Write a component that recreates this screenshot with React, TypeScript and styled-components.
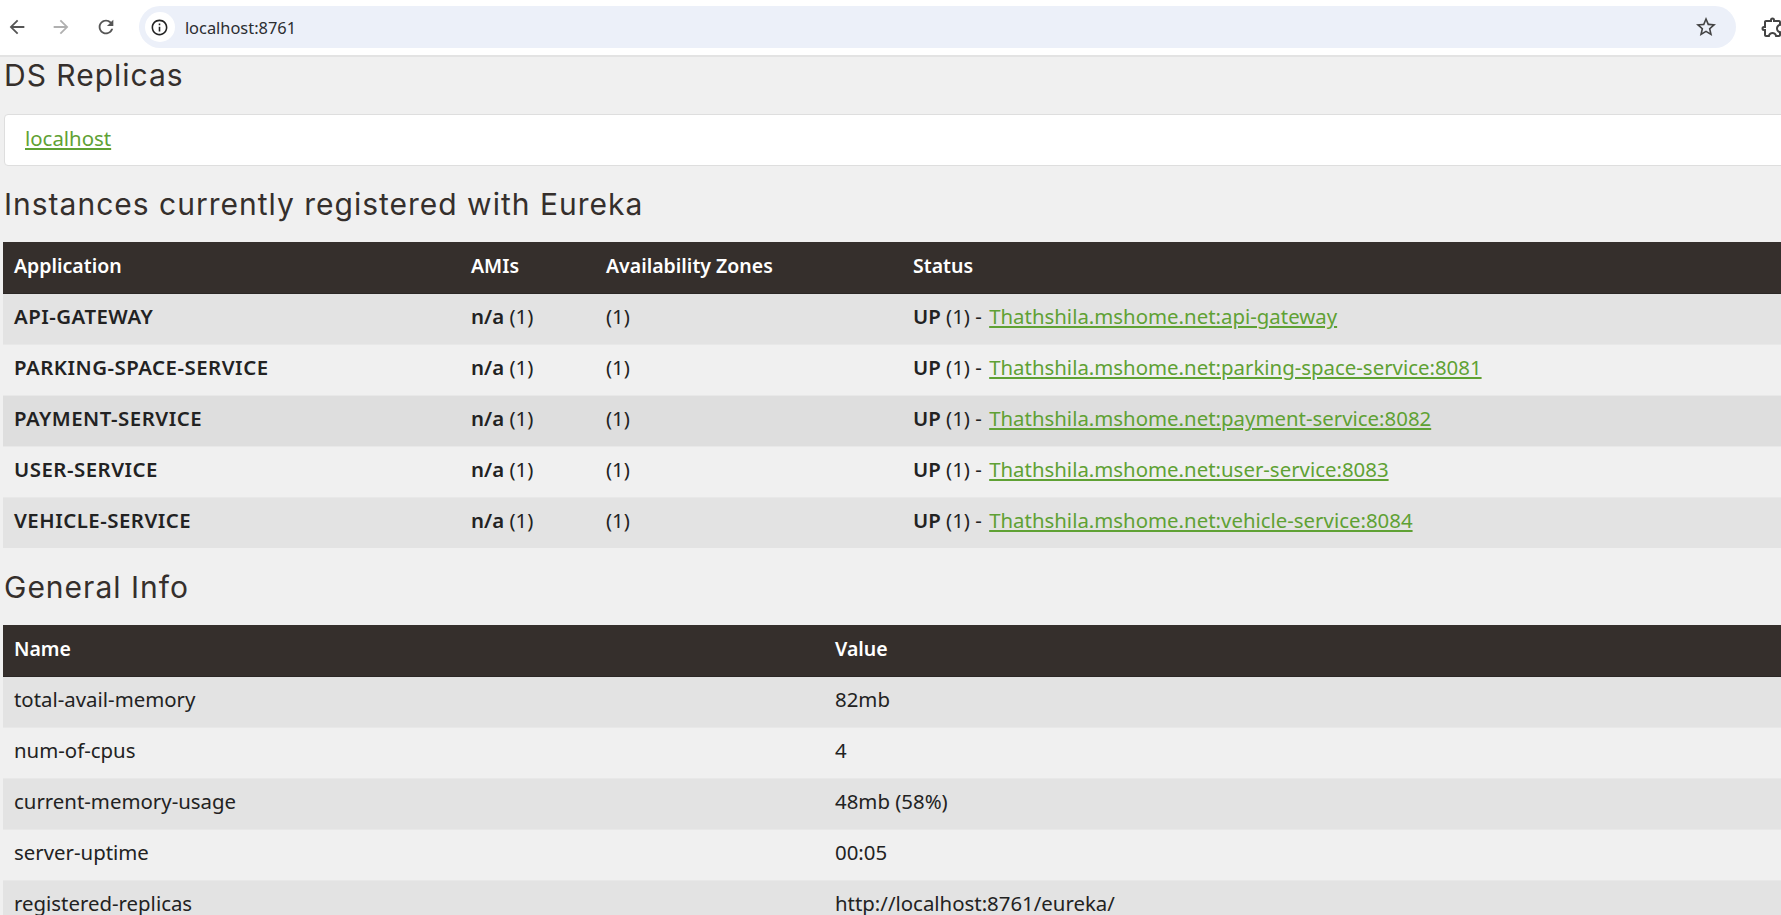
import React from 'react';
import styled, {createGlobalStyle} from 'styled-components';
import {MdArrowBack, MdArrowForward, MdRefresh, MdStarBorder, MdInfoOutline, MdOutlineExtension} from 'react-icons/md';

const GlobalStyle = createGlobalStyle`
	html, body {
		margin: 0;
		padding: 0;
		height: 100%;
		overflow: hidden;
		background: #f0f0f0;
	}
`;

const Browser = styled.div`
	width: 1781px;
	height: 915px;
	overflow: hidden;
	display: flex;
	flex-direction: column;
	font-family: "Noto Sans", sans-serif;
`;

const ChromeBar = styled.header`
	flex: none;
	height: 57px;
	box-sizing: border-box;
	background: #fff;
	border-bottom: 2px solid #e3e3e3;
	display: flex;
	align-items: flex-start;
	padding: 6px 0 0 6px;
`;

const NavButton = styled.span<{$muted?: boolean}>`
	flex: none;
	width: 22px;
	height: 42px;
	margin-right: 22.3px;
	display: flex;
	align-items: center;
	justify-content: center;
	font-size: 22px;
	color: ${p => (p.$muted ? '#b0b0b0' : '#555')};
`;

const Omnibox = styled.div`
	flex: none;
	width: 1597px;
	height: 42px;
	box-sizing: border-box;
	background: #ecf0f9;
	border-radius: 21px;
	display: flex;
	align-items: center;
	padding: 0 18px 0 6px;
`;

const SiteInfo = styled.span`
	flex: none;
	width: 30px;
	height: 30px;
	border-radius: 50%;
	background: #fff;
	color: #222;
	font-size: 19px;
	display: flex;
	align-items: center;
	justify-content: center;
`;

const Url = styled.span`
	flex: 1;
	margin-left: 10px;
	font-size: 16.4px;
	color: #2b2d31;
`;

const StarIcon = styled(MdStarBorder)`
	font-size: 24px;
	color: #444;
`;

const ExtensionIcon = styled(MdOutlineExtension)`
	flex: none;
	margin: 9px 0 0 23px;
	font-size: 24px;
	color: #444;
	transform: scaleX(-1);
`;

const Page = styled.main`
	flex: 1;
	min-height: 0;
	padding: 0 0 0 3px;
	color: #222;
`;

const Heading = styled.h3<{$top?: number}>`
	margin: ${p => p.$top ?? 0}px 0 0;
	padding-left: 1px;
	height: 36px;
	font-family: Inter, sans-serif;
	font-weight: 400;
	font-size: 30px;
	letter-spacing: 1px;
	line-height: 36px;
	color: #352f2c;
`;

const Card = styled.div`
	width: 1800px;
	height: 52px;
	box-sizing: border-box;
	margin: 21px 0 20px 1px;
	padding: 0 0 4px 20px;
	background: #fff;
	border: 1px solid #dedede;
	border-radius: 4px;
	display: flex;
	align-items: center;
	font-size: 20.4px;
`;

const Link = styled.a`
	color: #5fa134;
	text-decoration: underline;
`;

const InstanceLink = styled(Link)`
	margin-left: 2px;
`;

const Table = styled.table`
	width: 1800px;
	margin: 20px 0 0;
	table-layout: fixed;
	border-collapse: collapse;
	font-size: 20.4px;
`;

const HeadCell = styled.th`
	height: 51px;
	padding: 0 11px 3px;
	box-sizing: border-box;
	background: #352f2c;
	color: #fff;
	font-size: 19.5px;
	font-weight: 600;
	text-align: left;
	border-bottom: 1px solid #2b2725;
`;

const Row = styled.tr<{$shade: string}>`
	background: ${p => p.$shade};
`;

const Cell = styled.td`
	height: 51px;
	padding: 0 11px 5px;
	box-sizing: border-box;
	border-top: 1px solid #e8e8e8;
	white-space: nowrap;
`;

const Strong = styled.b`
	font-weight: 600;
`;

const AppName = styled(Strong)`
	letter-spacing: 0.5px;
`;

const instances = [
	{name: 'API-GATEWAY', link: 'Thathshila.mshome.net:api-gateway', shade: '#e3e3e3'},
	{name: 'PARKING-SPACE-SERVICE', link: 'Thathshila.mshome.net:parking-space-service:8081', shade: '#f0f0f0'},
	{name: 'PAYMENT-SERVICE', link: 'Thathshila.mshome.net:payment-service:8082', shade: '#dedede'},
	{name: 'USER-SERVICE', link: 'Thathshila.mshome.net:user-service:8083', shade: '#f0f0f0'},
	{name: 'VEHICLE-SERVICE', link: 'Thathshila.mshome.net:vehicle-service:8084', shade: '#e3e3e3'}
];

const info = [
	['total-avail-memory', '82mb'],
	['num-of-cpus', '4'],
	['current-memory-usage', '48mb (58%)'],
	['server-uptime', '00:05'],
	['registered-replicas', 'http://localhost:8761/eureka/']
];

export default function App() {
	return (
		<Browser>
			<GlobalStyle />
			<ChromeBar>
				<NavButton><MdArrowBack /></NavButton>
				<NavButton $muted><MdArrowForward /></NavButton>
				<NavButton><MdRefresh /></NavButton>
				<Omnibox>
					<SiteInfo><MdInfoOutline /></SiteInfo>
					<Url>localhost:8761</Url>
					<StarIcon />
				</Omnibox>
				<ExtensionIcon />
			</ChromeBar>
			<Page>
				<Heading>DS Replicas</Heading>
				<Card><Link href="#">localhost</Link></Card>
				<Heading>Instances currently registered with Eureka</Heading>
				<Table>
					<colgroup>
						<col width={457} />
						<col width={135} />
						<col width={307} />
						<col />
					</colgroup>
					<thead>
						<tr>
							<HeadCell>Application</HeadCell>
							<HeadCell>AMIs</HeadCell>
							<HeadCell>Availability Zones</HeadCell>
							<HeadCell>Status</HeadCell>
						</tr>
					</thead>
					<tbody>
						{instances.map(item => (
							<Row key={item.name} $shade={item.shade}>
								<Cell><AppName>{item.name}</AppName></Cell>
								<Cell><Strong>n/a</Strong> (1)</Cell>
								<Cell>(1)</Cell>
								<Cell><Strong>UP</Strong> (1) - <InstanceLink href="#">{item.link}</InstanceLink></Cell>
							</Row>
						))}
					</tbody>
				</Table>
				<Heading $top={21}>General Info</Heading>
				<Table>
					<colgroup>
						<col width={821} />
						<col />
					</colgroup>
					<thead>
						<tr>
							<HeadCell>Name</HeadCell>
							<HeadCell>Value</HeadCell>
						</tr>
					</thead>
					<tbody>
						{info.map(([name, value], i) => (
							<Row key={name} $shade={i % 2 ? '#f0f0f0' : '#e3e3e3'}>
								<Cell>{name}</Cell>
								<Cell>{value}</Cell>
							</Row>
						))}
					</tbody>
				</Table>
			</Page>
		</Browser>
	);
}
